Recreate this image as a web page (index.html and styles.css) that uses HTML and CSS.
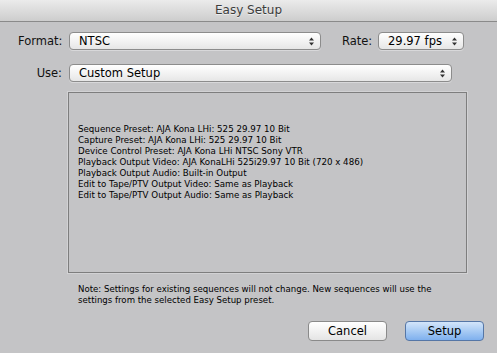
FILE: index.html
```html
<!DOCTYPE html>
<html>
<head>
<meta charset="utf-8">
<link rel="stylesheet" href="styles.css">
</head>
<body>
<div class="window">
  <div class="titlebar">Easy Setup</div>
  <div class="content">
    <div class="row row-format">
      <span class="label">Format:</span>
      <div class="popup popup-format"><span>NTSC</span><svg class="arrows" width="5" height="9" viewBox="0 0 5 9"><path d="M0 3.5 L2.5 0.5 L5 3.5 Z M0 5.5 L2.5 8.5 L5 5.5 Z" fill="#333"/></svg></div>
      <span class="label label-rate">Rate:</span>
      <div class="popup popup-rate"><span>29.97 fps</span><svg class="arrows" width="5" height="9" viewBox="0 0 5 9"><path d="M0 3.5 L2.5 0.5 L5 3.5 Z M0 5.5 L2.5 8.5 L5 5.5 Z" fill="#333"/></svg></div>
    </div>
    <div class="row row-use">
      <span class="label">Use:</span>
      <div class="popup popup-use"><span>Custom Setup</span><svg class="arrows" width="5" height="9" viewBox="0 0 5 9"><path d="M0 3.5 L2.5 0.5 L5 3.5 Z M0 5.5 L2.5 8.5 L5 5.5 Z" fill="#333"/></svg></div>
    </div>
    <div class="infobox">
      <div>Sequence Preset: AJA Kona LHi: 525 29.97 10 Bit</div>
      <div>Capture Preset: AJA Kona LHi: 525 29.97 10 Bit</div>
      <div>Device Control Preset: AJA Kona LHi NTSC Sony VTR</div>
      <div>Playback Output Video: AJA KonaLHi 525i29.97 10 Bit (720 x 486)</div>
      <div>Playback Output Audio: Built-in Output</div>
      <div>Edit to Tape/PTV Output Video: Same as Playback</div>
      <div>Edit to Tape/PTV Output Audio: Same as Playback</div>
    </div>
    <div class="note">Note: Settings for existing sequences will not change. New sequences will use the<br>settings from the selected Easy Setup preset.</div>
    <div class="buttons">
      <div class="btn btn-cancel">Cancel</div>
      <div class="btn btn-setup">Setup</div>
    </div>
  </div>
</div>
</body>
</html>
```

FILE: styles.css
```css
html, body {
  margin: 0;
  padding: 0;
}
body {
  width: 497px;
  height: 353px;
  overflow: hidden;
  background: #c4c4c6;
  font-family: "Lucida Grande", "DejaVu Sans", sans-serif;
  color: #111;
}
.window {
  width: 497px;
  height: 353px;
  display: flex;
  flex-direction: column;
}
.titlebar {
  height: 21px;
  line-height: 21px;
  text-align: center;
  font-size: 12px;
  color: #3c3c3c;
  background: linear-gradient(#ebebeb, #cdcdcd);
  border-bottom: 1px solid #8a8a8a;
  text-shadow: 0 1px 0 rgba(255,255,255,0.6);
}
.content {
  padding: 10px 13px 0 18px;
  display: flex;
  flex-direction: column;
}
.row {
  display: flex;
  align-items: center;
  height: 18px;
}
.row-use {
  margin-top: 14px;
}
.label {
  width: 44px;
  text-align: right;
  font-size: 11.5px;
  margin-right: 7px;
  color: #111;
}
.label-rate {
  width: 28px;
  margin-left: 21px;
  margin-right: 8px;
}
.popup {
  box-sizing: border-box;
  height: 18px;
  border: 1px solid #8c8c8c;
  border-radius: 4px;
  background: linear-gradient(#ffffff, #f3f3f3 50%, #e6e6e6);
  display: flex;
  align-items: center;
  justify-content: space-between;
  padding: 0 6px 0 9px;
  font-size: 11.5px;
  color: #000;
  box-shadow: 0 1px 0 rgba(255,255,255,0.35);
}
.popup-format { width: 252px; }
.popup-rate { width: 86px; }
.popup-use { width: 383px; }
.arrows {
  display: block;
  flex: none;
}
.infobox {
  box-sizing: border-box;
  margin-top: 10px;
  margin-left: 50px;
  width: 399px;
  height: 181px;
  border: 1px solid #7e7e7e;
  box-shadow: 0 0 0 1px #d2d2d4;
  padding: 31px 0 0 9px;
  font-size: 8.7px;
  line-height: 11px;
  color: #000;
}
.note {
  margin-top: 11px;
  margin-left: 60px;
  font-size: 8.6px;
  line-height: 11px;
  color: #000;
}
.buttons {
  display: flex;
  justify-content: flex-end;
  gap: 18px;
  margin-top: 15px;
}
.btn {
  box-sizing: border-box;
  width: 79px;
  height: 20px;
  border-radius: 4px;
  border: 1px solid #8a8a8a;
  font-size: 11.5px;
  display: flex;
  align-items: center;
  justify-content: center;
  color: #000;
}
.btn-cancel {
  background: linear-gradient(#ffffff, #f2f2f2 50%, #e4e4e4);
}
.btn-setup {
  border-color: #5576a6;
  background: linear-gradient(#d3e5fa, #a8cbf4 50%, #7fb0ee);
}
```
